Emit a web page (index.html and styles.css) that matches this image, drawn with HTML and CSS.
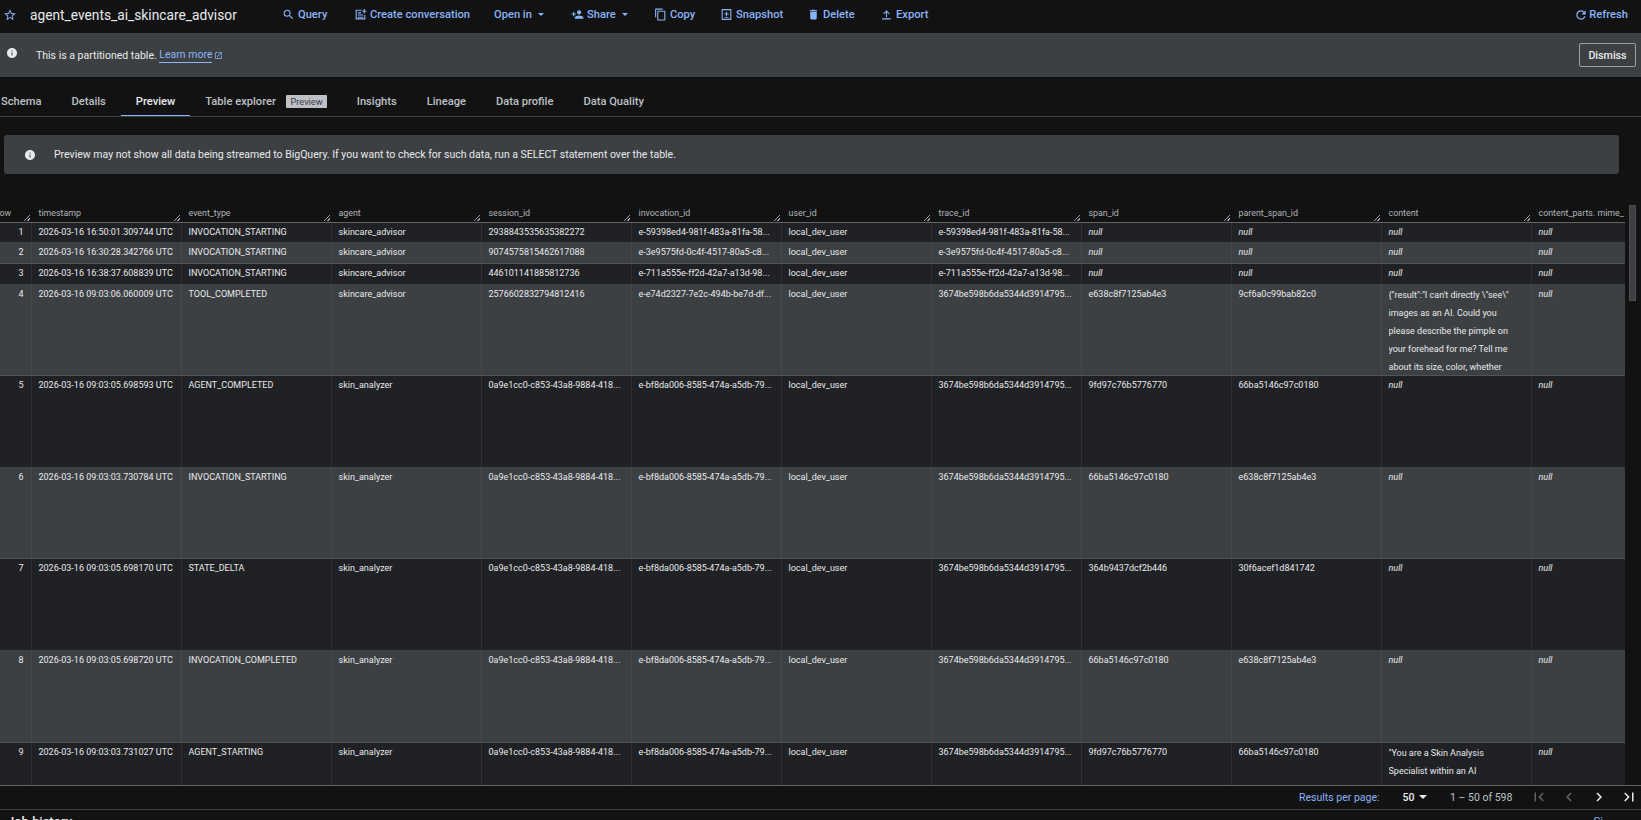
FILE: index.html
```html
<!DOCTYPE html>
<html lang="en">
<head>
<meta charset="utf-8">
<title>agent_events_ai_skincare_advisor</title>
<link rel="stylesheet" href="styles.css">
</head>
<body>
<header class="toolbar">
  <svg class="star" viewBox="0 0 24 24"><path d="M22 9.24l-7.19-.62L12 2 9.19 8.63 2 9.24l5.46 4.73L5.82 21 12 17.27 18.18 21l-1.63-7.03L22 9.24zM12 15.4l-3.76 2.27 1-4.28-3.32-2.88 4.38-.38L12 6.1l1.71 4.04 4.38.38-3.32 2.88 1 4.28L12 15.4z"/></svg>
  <h1 class="title">agent_events_ai_skincare_advisor</h1>
  <nav class="actions">
    <a class="act act-query"><svg class="ico" viewBox="0 0 24 24"><path d="M15.5 14h-.79l-.28-.27A6.47 6.47 0 0 0 16 9.5 6.5 6.5 0 1 0 9.5 16c1.61 0 3.09-.59 4.23-1.57l.27.28v.79l5 4.99L20.49 19l-4.99-5zm-6 0C7.01 14 5 11.99 5 9.5S7.01 5 9.5 5 14 7.01 14 9.5 11.99 14 9.5 14z"/></svg>Query</a>
    <a class="act act-create"><svg class="ico" viewBox="0 0 24 24"><path d="M3 3h11v2H5v14h14v-6h2v8H3zM7 8h6v2H7zM7 12h10v2H7zM7 16h10v2H7zM18 2h2v3h3v2h-3v3h-2V7h-3V5h3z"/></svg>Create conversation</a>
    <a class="act act-open">Open in<i class="caret"></i></a>
    <a class="act act-share"><svg class="ico" viewBox="0 0 24 24"><path d="M15 12c2.21 0 4-1.79 4-4s-1.79-4-4-4-4 1.79-4 4 1.79 4 4 4zm-9-2V7H4v3H1v2h3v3h2v-3h3v-2H6zm9 4c-2.67 0-8 1.34-8 4v2h16v-2c0-2.66-5.33-4-8-4z"/></svg>Share<i class="caret"></i></a>
    <a class="act act-copy"><svg class="ico" viewBox="0 0 24 24"><path d="M16 1H4c-1.1 0-2 .9-2 2v14h2V3h12V1zm3 4H8c-1.1 0-2 .9-2 2v14c0 1.1.9 2 2 2h11c1.1 0 2-.9 2-2V7c0-1.1-.9-2-2-2zm0 16H8V7h11v14z"/></svg>Copy</a>
    <a class="act act-snap"><svg class="ico" viewBox="0 0 24 24"><path d="M4 2h16a1 1 0 0 1 1 1v18a1 1 0 0 1-1 1H4a1 1 0 0 1-1-1V3a1 1 0 0 1 1-1zm1 2v16h14V4zm6 3h2v3h3v2h-3v3h-2v-3H8v-2h3zM8 17h8v1.500H8z"/></svg>Snapshot</a>
    <a class="act act-del"><svg class="ico" viewBox="0 0 24 24"><path d="M6 19c0 1.100.9 2 2 2h8c1.100 0 2-.9 2-2V7H6v12zM19 4h-3.500l-1-1h-5l-1 1H5v2h14V4z"/></svg>Delete</a>
    <a class="act act-export"><svg class="ico" viewBox="0 0 24 24"><path d="M4 19h16v2H4zM11 17V7.800L7.400 11.400 6 10l6-6 6 6-1.400 1.400L13 7.800V17z"/></svg>Export</a>
  </nav>
  <a class="act refresh"><svg class="ico ico-lg" viewBox="0 0 24 24"><path d="M17.650 6.350A7.958 7.958 0 0 0 12 4c-4.420 0-7.990 3.580-7.990 8s3.570 8 7.990 8c3.730 0 6.840-2.550 7.730-6h-2.080A5.990 5.990 0 0 1 12 18c-3.310 0-6-2.690-6-6s2.690-6 6-6c1.660 0 3.140.690 4.220 1.780L13 11h7V4l-2.350 2.350z"/></svg>Refresh</a>
</header>

<section class="notice">
  <svg class="info" viewBox="0 0 24 24"><path d="M12 2C6.480 2 2 6.480 2 12s4.480 10 10 10 10-4.480 10-10S17.520 2 12 2zm1 15h-2v-6h2v6zm0-8h-2V7h2v2z"/></svg>
  <p class="notice-text">This is a partitioned table. <a class="link">Learn more</a><svg class="ext" viewBox="0 0 24 24"><path d="M19 19H5V5h7V3H5a2 2 0 0 0-2 2v14c0 1.100.9 2 2 2h14c1.100 0 2-.9 2-2v-7h-2v7zM14 3v2h3.590l-9.830 9.830 1.410 1.410L19 6.410V10h2V3h-7z"/></svg></p>
  <button class="dismiss">Dismiss</button>
</section>

<nav class="tabs">
  <a class="tab">Schema</a>
  <a class="tab">Details</a>
  <a class="tab active">Preview</a>
  <a class="tab">Table explorer<span class="chip">Preview</span></a>
  <a class="tab">Insights</a>
  <a class="tab">Lineage</a>
  <a class="tab">Data profile</a>
  <a class="tab">Data Quality</a>
</nav>

<section class="banner">
  <svg class="info" viewBox="0 0 24 24"><path d="M12 2C6.480 2 2 6.480 2 12s4.480 10 10 10 10-4.480 10-10S17.520 2 12 2zm1 15h-2v-6h2v6zm0-8h-2V7h2v2z"/></svg>
  <p>Preview may not show all data being streamed to BigQuery. If you want to check for such data, run a SELECT statement over the table.</p>
</section>

<main class="grid-wrap">
  <div class="grid-clip">
    <table class="grid">
      <colgroup><col class="c-row"><col class="c"><col class="c"><col class="c"><col class="c"><col class="c"><col class="c"><col class="c"><col class="c"><col class="c"><col class="c"><col class="c"></colgroup>
      <thead>
        <tr><th class="rn-h">Row</th><th>timestamp</th><th>event_type</th><th>agent</th><th>session_id</th><th>invocation_id</th><th>user_id</th><th>trace_id</th><th>span_id</th><th>parent_span_id</th><th>content</th><th class="last">content_parts. mime_</th></tr>
      </thead>
      <tbody>
        <tr class="short"><td class="rn">1</td><td>2026-03-16 16:50:01.309744 UTC</td><td>INVOCATION_STARTING</td><td>skincare_advisor</td><td>2938843535635382272</td><td>e-59398ed4-981f-483a-81fa-58...</td><td>local_dev_user</td><td>e-59398ed4-981f-483a-81fa-58...</td><td class="nul">null</td><td class="nul">null</td><td class="nul">null</td><td class="nul">null</td></tr>
        <tr class="short alt"><td class="rn">2</td><td>2026-03-16 16:30:28.342766 UTC</td><td>INVOCATION_STARTING</td><td>skincare_advisor</td><td>9074575815462617088</td><td>e-3e9575fd-0c4f-4517-80a5-c8...</td><td>local_dev_user</td><td>e-3e9575fd-0c4f-4517-80a5-c8...</td><td class="nul">null</td><td class="nul">null</td><td class="nul">null</td><td class="nul">null</td></tr>
        <tr class="short"><td class="rn">3</td><td>2026-03-16 16:38:37.608839 UTC</td><td>INVOCATION_STARTING</td><td>skincare_advisor</td><td>446101141885812736</td><td>e-711a555e-ff2d-42a7-a13d-98...</td><td>local_dev_user</td><td>e-711a555e-ff2d-42a7-a13d-98...</td><td class="nul">null</td><td class="nul">null</td><td class="nul">null</td><td class="nul">null</td></tr>
        <tr class="tall alt"><td class="rn">4</td><td>2026-03-16 09:03:06.060009 UTC</td><td>TOOL_COMPLETED</td><td>skincare_advisor</td><td>2576602832794812416</td><td>e-e74d2327-7e2c-494b-be7d-df...</td><td>local_dev_user</td><td>3674be598b6da5344d3914795...</td><td>e638c8f7125ab4e3</td><td>9cf6a0c99bab82c0</td><td class="wrap"><div class="clamp">{"result":"I can't directly \"see\" images as an AI. Could you please describe the pimple on your forehead for me? Tell me about its size, color, whether</div></td><td class="nul">null</td></tr>
        <tr class="tall"><td class="rn">5</td><td>2026-03-16 09:03:05.698593 UTC</td><td>AGENT_COMPLETED</td><td>skin_analyzer</td><td>0a9e1cc0-c853-43a8-9884-418...</td><td>e-bf8da006-8585-474a-a5db-79...</td><td>local_dev_user</td><td>3674be598b6da5344d3914795...</td><td>9fd97c76b5776770</td><td>66ba5146c97c0180</td><td class="nul">null</td><td class="nul">null</td></tr>
        <tr class="tall alt"><td class="rn">6</td><td>2026-03-16 09:03:03.730784 UTC</td><td>INVOCATION_STARTING</td><td>skin_analyzer</td><td>0a9e1cc0-c853-43a8-9884-418...</td><td>e-bf8da006-8585-474a-a5db-79...</td><td>local_dev_user</td><td>3674be598b6da5344d3914795...</td><td>66ba5146c97c0180</td><td>e638c8f7125ab4e3</td><td class="nul">null</td><td class="nul">null</td></tr>
        <tr class="tall"><td class="rn">7</td><td>2026-03-16 09:03:05.698170 UTC</td><td>STATE_DELTA</td><td>skin_analyzer</td><td>0a9e1cc0-c853-43a8-9884-418...</td><td>e-bf8da006-8585-474a-a5db-79...</td><td>local_dev_user</td><td>3674be598b6da5344d3914795...</td><td>364b9437dcf2b446</td><td>30f6acef1d841742</td><td class="nul">null</td><td class="nul">null</td></tr>
        <tr class="tall alt"><td class="rn">8</td><td>2026-03-16 09:03:05.698720 UTC</td><td>INVOCATION_COMPLETED</td><td>skin_analyzer</td><td>0a9e1cc0-c853-43a8-9884-418...</td><td>e-bf8da006-8585-474a-a5db-79...</td><td>local_dev_user</td><td>3674be598b6da5344d3914795...</td><td>66ba5146c97c0180</td><td>e638c8f7125ab4e3</td><td class="nul">null</td><td class="nul">null</td></tr>
        <tr class="tall"><td class="rn">9</td><td>2026-03-16 09:03:03.731027 UTC</td><td>AGENT_STARTING</td><td>skin_analyzer</td><td>0a9e1cc0-c853-43a8-9884-418...</td><td>e-bf8da006-8585-474a-a5db-79...</td><td>local_dev_user</td><td>3674be598b6da5344d3914795...</td><td>9fd97c76b5776770</td><td>66ba5146c97c0180</td><td class="wrap"><div class="clamp">"You are a Skin Analysis Specialist within an AI Skincare Advisor</div></td><td class="nul">null</td></tr>
      </tbody>
    </table>
  </div>
  <div class="scroll"><div class="thumb"></div></div>
</main>

<footer class="pager">
  <span class="pp-label">Results per page:</span>
  <span class="pp-val">50<i class="caret light"></i></span>
  <span class="pp-range">1 – 50 of 598</span>
  <svg class="pg off" viewBox="0 0 24 24"><path d="M18.410 16.590L13.820 12l4.590-4.590L17 6l-6 6 6 6zM6 6h2v12H6z"/></svg>
  <svg class="pg off" viewBox="0 0 24 24"><path d="M15.410 7.410L14 6l-6 6 6 6 1.410-1.410L10.830 12z"/></svg>
  <svg class="pg" viewBox="0 0 24 24"><path d="M10 6L8.590 7.410 13.170 12l-4.580 4.590L10 18l6-6z"/></svg>
  <svg class="pg pg-last" viewBox="0 0 24 24"><path d="M5.590 7.410L10.180 12l-4.590 4.590L7 18l6-6-6-6zM16 6h2v12h-2z"/></svg>
</footer>

<section class="jobs">
  <h2>Job history</h2>
  <a class="jobs-link">Si</a>
</section>
</body>
</html>
```

FILE: styles.css
```css
* { box-sizing: border-box; }
html, body { margin: 0; padding: 0; }
body {
  width: 1641px;
  height: 820px;
  overflow: hidden;
  background: #121212;
  color: #e8eaed;
  font-family: Roboto, "Liberation Sans", sans-serif;
  display: flex;
  flex-direction: column;
}

/* toolbar */
.toolbar {
  flex: 0 0 33px;
  height: 33px;
  display: flex;
  align-items: center;
  padding-left: 3px;
  padding-bottom: 4px;
}
.star { width: 14px; height: 14px; fill: #8ab4f8; margin-right: 13px; }
.title { margin: 0; font-size: 13.75px; font-weight: 400; color: #e8eaed; width: 252px; white-space: nowrap; }
.actions { display: flex; align-items: center; }
.act {
  display: flex;
  align-items: center;
  color: #8ab4f8;
  font-size: 11.15px;
  font-weight: 500;
  white-space: nowrap;
}
.ico { width: 13px; height: 13px; fill: #8ab4f8; margin-right: 3px; }
.ico-lg { width: 14px; height: 14px; margin-right: 1px; }
.act-query { width: 72px; }
.act-create { width: 140px; }
.act-open { width: 77px; }
.act-share { width: 83px; }
.act-copy { width: 66px; }
.act-snap { width: 87px; }
.act-del { width: 73px; }
.refresh { margin-left: auto; padding-right: 13px; }
.caret {
  display: inline-block;
  margin-left: 6px;
  border-left: 3px solid transparent;
  border-right: 3px solid transparent;
  border-top: 3px solid #8ab4f8;
}
.caret.light { border-left-width: 4px; border-right-width: 4px; border-top: 4px solid #e8eaed; margin-left: 5px; }

/* partition notice */
.notice {
  flex: 0 0 44px;
  height: 44px;
  background: #3c4043;
  display: flex;
  align-items: center;
  padding-left: 6px;
  padding-right: 5px;
}
.notice .info { width: 12px; height: 12px; fill: #e8eaed; margin-right: 18px; margin-top: -4px; }
.notice-text { margin: 0; font-size: 10.5px; color: #e8eaed; display: flex; align-items: center; white-space: pre; }
.link { color: #8ab4f8; border-bottom: 1px solid #8ab4f8; padding-bottom: 1px; }
.ext { width: 9px; height: 9px; fill: #8ab4f8; margin-left: 2px; }
.dismiss {
  margin-left: auto;
  width: 57px;
  height: 24px;
  padding: 0;
  background: transparent;
  border: 1px solid #9aa0a6;
  border-radius: 2px;
  color: #e8eaed;
  font-family: inherit;
  font-size: 10.7px;
  font-weight: 500;
}

/* tabs */
.tabs {
  flex: 0 0 40px;
  height: 40px;
  display: flex;
  border-bottom: 1px solid #3c4043;
  padding-left: 1px;
}
.tab {
  display: flex;
  align-items: center;
  font-size: 11.15px;
  font-weight: 500;
  color: #bdc1c6;
  margin-right: 30px;
  padding-top: 10px;
  white-space: nowrap;
  height: 39px;
}
.tab.active { color: #e8eaed; border-bottom: 1px solid #8ab4f8; padding: 10px 15px 0; margin: 0 15px 0 -15px; }
.chip {
  background: #bdc1c6;
  color: #3c4043;
  font-size: 9.25px;
  font-weight: 400;
  padding: 1px 4px;
  margin-left: 10.5px;
  border-radius: 1px;
}

/* preview banner */
.banner {
  flex: 0 0 39px;
  height: 39px;
  margin: 18px 22px 0 4px;
  background: #3c4043;
  border-radius: 3px;
  display: flex;
  align-items: center;
  padding-left: 20px;
}
.banner .info { width: 12px; height: 12px; fill: #e8eaed; margin-right: 18px; }
.banner p { margin: 0; font-size: 10.5px; color: #e8eaed; white-space: nowrap; }

/* table */
.grid-wrap {
  flex: 0 0 581px;
  height: 581px;
  margin-top: 31px;
  display: flex;
  border-bottom: 1px solid #5f6368;
  overflow: hidden;
}
.grid-clip { width: 1625px; overflow: hidden; }
.grid {
  table-layout: fixed;
  border-collapse: collapse;
  width: 1669px;
  margin-left: -19px;
  font-size: 9px;
}
.c-row { width: 50px; }
.c { width: 150px; }
th {
  position: relative;
  height: 17px;
  padding: 0 7px 0 7.5px;
  text-align: left;
  font-size: 8.85px;
  font-weight: 400;
  color: #b0b4b9;
  white-space: nowrap;
  overflow: hidden;
  border-bottom: 1px solid #5f6368;
  vertical-align: middle;
}
th.rn-h { padding-left: 13px; }
th.last { padding-right: 0; }
th:not(.last)::after {
  content: "";
  position: absolute;
  right: 1px;
  bottom: 1px;
  width: 6px;
  height: 6px;
  background: linear-gradient(135deg, transparent 45%, #9aa0a6 45%, #9aa0a6 58%, transparent 58%, transparent 72%, #9aa0a6 72%, #9aa0a6 84%, transparent 84%);
}
td {
  padding: 0 7px;
  background: #202124;
  color: #e8eaed;
  white-space: nowrap;
  overflow: hidden;
  vertical-align: top;
  border-left: 1px solid #2e3033;
  border-bottom: 1px solid #3c4043;
}
tr.alt td { background: #3c4043; border-left-color: #464a4d; border-bottom-color: #505458; }
td.rn { text-align: right; border-left: 0; padding-right: 7px; }
tr.short td { height: 20.33px; line-height: 19.7px; }
tr.tall td { height: 91.6px; line-height: 19px; }
.nul { font-style: italic; }
td.wrap { white-space: normal; padding-right: 20px; }
.clamp { height: 90px; overflow: hidden; line-height: 18px; padding-top: 1px; }

.scroll { flex: 0 0 16px; position: relative; }
.thumb { position: absolute; left: 4px; top: 0; width: 7px; height: 96px; background: #3c4043; border: 1px solid #4a4e52; }

/* pager */
.pager {
  flex: 0 0 24px;
  height: 24px;
  display: flex;
  align-items: center;
  font-size: 10.5px;
  padding-left: 1299px;
  padding-bottom: 1px;
  border-bottom: 1px solid #3c4043;
}
.pp-label { color: #8ab4f8; flex: 0 0 103.5px; white-space: nowrap; }
.pp-val { color: #e8eaed; font-weight: 500; flex: 0 0 47.5px; display: flex; align-items: center; }
.pp-range { color: #bdc1c6; flex: 0 0 80px; white-space: nowrap; }
.pg { width: 18px; height: 18px; fill: #e8eaed; margin-right: 12px; flex: none; }
.pg-last { margin-right: 0; }
.pg.off { fill: #5f6368; }

/* job history strip */
.jobs { flex: 0 0 20px; display: flex; justify-content: space-between; padding: 4px 38px 0 7px; }
.jobs h2 { margin: 0; font-size: 13px; font-weight: 500; color: #e8eaed; line-height: 16px; }
.jobs-link { color: #8ab4f8; font-size: 11.5px; }
```
